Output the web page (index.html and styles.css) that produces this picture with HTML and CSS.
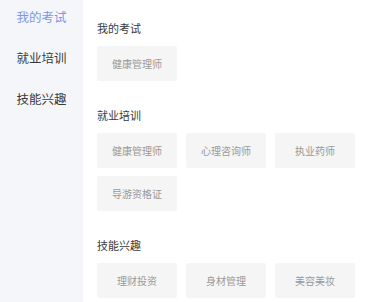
FILE: index.html
```html
<!DOCTYPE html>
<html lang="zh-CN">
<head>
<meta charset="utf-8">
<link rel="stylesheet" href="styles.css">
</head>
<body>
<div class="page">
  <nav class="sidebar">
    <div class="nav-item active">我的考试</div>
    <div class="nav-item">就业培训</div>
    <div class="nav-item">技能兴趣</div>
  </nav>
  <main class="main">
    <section class="section">
      <h3 class="section-title">我的考试</h3>
      <div class="tags">
        <div class="tag">健康管理师</div>
      </div>
    </section>
    <section class="section">
      <h3 class="section-title">就业培训</h3>
      <div class="tags">
        <div class="tag">健康管理师</div>
        <div class="tag">心理咨询师</div>
        <div class="tag">执业药师</div>
        <div class="tag">导游资格证</div>
      </div>
    </section>
    <section class="section">
      <h3 class="section-title">技能兴趣</h3>
      <div class="tags">
        <div class="tag">理财投资</div>
        <div class="tag">身材管理</div>
        <div class="tag">美容美妆</div>
      </div>
    </section>
  </main>
</div>
</body>
</html>
```

FILE: styles.css
```css
html, body {
  margin: 0;
  padding: 0;
  background: #ffffff;
  font-family: "Noto Sans CJK SC", "Noto Sans", sans-serif;
}

.page {
  display: flex;
  width: 369px;
  height: 302px;
  overflow: hidden;
}

.sidebar {
  width: 83px;
  flex: none;
  background: #f5f6fa;
  display: flex;
  flex-direction: column;
  align-items: center;
  gap: 21px;
  padding-top: 7px;
  box-sizing: border-box;
}

.nav-item {
  font-size: 12.5px;
  line-height: 20px;
  color: #3a3a3a;
}

.nav-item.active {
  color: #7f95e6;
}

.main {
  flex: 1;
  padding: 20px 0 0 14px;
  box-sizing: border-box;
}

.section {
  margin-bottom: 26px;
}

.section-title {
  margin: 0 0 10px 0;
  font-size: 11px;
  line-height: 16px;
  font-weight: normal;
  color: #3a3a3a;
}

.tags {
  display: grid;
  grid-template-columns: repeat(3, 80px);
  column-gap: 9px;
  row-gap: 8px;
}

.tag {
  height: 35px;
  background: #f5f5f5;
  border-radius: 2px;
  display: flex;
  align-items: center;
  justify-content: center;
  font-size: 10px;
  color: #999999;
}
```
